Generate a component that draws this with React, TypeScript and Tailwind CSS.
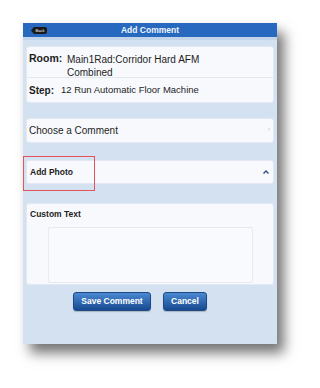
import React from "react";

const font = { fontFamily: '"Liberation Sans", Arial, sans-serif' };

export default function App() {
  return (
    <div className="w-[320px] h-[388px] bg-white relative" style={font}>
      <div className="absolute left-[23px] top-[23px] w-[254px] h-[321px] bg-[#d3e1f0] shadow-[7px_9px_12px_rgba(0,0,0,0.55)] flex flex-col">
        {/* header */}
        <div className="h-[14px] bg-[#2769bf] relative flex items-center justify-center">
          <div className="absolute left-[8px] top-[4px] h-[7px] w-[16px] bg-[#1a1a1a] rounded-[2px] flex items-center justify-center [clip-path:polygon(0_50%,18%_0,100%_0,100%_100%,18%_100%)]">
            <span className="text-[4px] text-white leading-none pl-[2px]">Back</span>
          </div>
          <span className="text-[8.5px] text-[#f2f6fc] font-semibold leading-none">Add Comment</span>
        </div>
        <div className="h-[3px] bg-[#c2d4ea]" />

        <div className="px-[3px] pt-[6px] flex flex-col">
          {/* info card */}
          <div className="h-[57px] bg-[#f7f9fc] border border-[#e2e9f2] rounded-[3px] flex flex-col text-[#1d1d1d]">
            <div className="h-[31px] flex px-[2px] pt-[5px] border-b border-[#e3e8ef]">
              <span className="w-[38px] text-[10.5px] font-bold leading-[12px]">Room:</span>
              <span className="text-[10px] leading-[13px] pt-[1px]">
                Main1Rad:Corridor Hard AFM
                <br />
                Combined
              </span>
            </div>
            <div className="flex-1 flex items-center px-[2px]">
              <span className="w-[32px] text-[10px] font-bold">Step:</span>
              <span className="text-[9.5px]">12 Run Automatic Floor Machine</span>
            </div>
          </div>

          {/* choose comment */}
          <div className="mt-[15px] h-[25px] bg-[#f7f9fc] border border-[#e2e9f2] rounded-[3px] flex items-center justify-between px-[2px]">
            <span className="text-[10px] text-[#1d1d1d]">Choose a Comment</span>
            <span className="text-[7px] text-[#c8ccd2] pr-[1px]">›</span>
          </div>

          {/* add photo */}
          <div className="mt-[17px] h-[24px] bg-[#f7f9fc] border border-[#e2e9f2] rounded-[3px] flex items-center justify-between px-[3px]">
            <span className="text-[8.5px] font-bold text-[#1d1d1d]">Add Photo</span>
            <svg width="6" height="4" viewBox="0 0 6 4" className="mr-[1px]">
              <path d="M0.5 3.5 L3 1 L5.5 3.5" fill="none" stroke="#2d4f7d" strokeWidth="1.3" />
            </svg>
          </div>

          {/* custom text */}
          <div className="mt-[19px] h-[82px] bg-[#f7f9fc] border border-[#e2e9f2] rounded-[3px] flex flex-col px-[3px] pt-[5px]">
            <span className="text-[8.5px] font-bold text-[#1d1d1d] leading-[10px]">Custom Text</span>
            <div className="mt-[8px] ml-[18px] w-[205px] h-[56px] border border-[#e6ebf1] rounded-[2px] bg-[#f8fafd]" />
          </div>

          {/* buttons */}
          <div className="mt-[7px] flex pl-[47px] gap-[12px]">
            <button className="w-[78px] h-[19px] rounded-[3px] bg-gradient-to-b from-[#4a8ad3] to-[#17498f] border border-[#1c4a86] text-white text-[8.5px] font-bold shadow-[0_1px_1px_rgba(0,0,0,0.2)]">
              Save Comment
            </button>
            <button className="w-[44px] h-[19px] rounded-[3px] bg-gradient-to-b from-[#4a8ad3] to-[#17498f] border border-[#1c4a86] text-white text-[8.5px] font-bold shadow-[0_1px_1px_rgba(0,0,0,0.2)]">
              Cancel
            </button>
          </div>
        </div>

        {/* highlight */}
        <div className="absolute left-0 top-[133px] w-[72px] h-[35px] border border-[#e2535c]" />
      </div>
    </div>
  );
}
